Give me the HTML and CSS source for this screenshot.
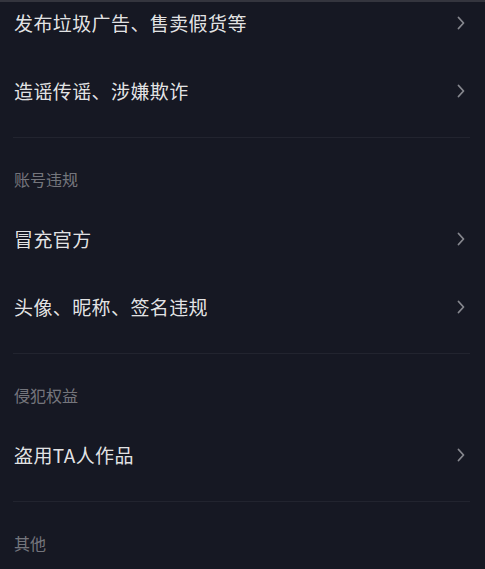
FILE: index.html
```html
<!DOCTYPE html>
<html lang="zh-CN">
<head>
<meta charset="utf-8">
<title>举报</title>
<link rel="stylesheet" href="styles.css">
</head>
<body>
<div class="topline"></div>
<div class="list">
  <div class="row"><span class="label">发布垃圾广告、售卖假货等</span><svg class="chev" width="8" height="14" viewBox="0 0 8 14"><path d="M1.5 1.5 L6.5 7 L1.5 12.5" /></svg></div>
  <div class="row"><span class="label">造谣传谣、涉嫌欺诈</span><svg class="chev" width="8" height="14" viewBox="0 0 8 14"><path d="M1.5 1.5 L6.5 7 L1.5 12.5" /></svg></div>
  <div class="divider"></div>
  <div class="section">账号违规</div>
  <div class="row"><span class="label">冒充官方</span><svg class="chev" width="8" height="14" viewBox="0 0 8 14"><path d="M1.5 1.5 L6.5 7 L1.5 12.5" /></svg></div>
  <div class="row"><span class="label">头像、昵称、签名违规</span><svg class="chev" width="8" height="14" viewBox="0 0 8 14"><path d="M1.5 1.5 L6.5 7 L1.5 12.5" /></svg></div>
  <div class="divider"></div>
  <div class="section">侵犯权益</div>
  <div class="row"><span class="label">盗用TA人作品</span><svg class="chev" width="8" height="14" viewBox="0 0 8 14"><path d="M1.5 1.5 L6.5 7 L1.5 12.5" /></svg></div>
  <div class="divider"></div>
  <div class="section">其他</div>
</div>
</body>
</html>
```
FILE: styles.css
```css
html, body {
  margin: 0;
  padding: 0;
  background: #161823;
  overflow: hidden;
}
body {
  font-family: "Noto Sans CJK SC", "Noto Sans", sans-serif;
  width: 485px;
  height: 569px;
}
.topline {
  height: 2px;
  background: #34353e;
}
.list {
  margin-top: -13px;
  display: flex;
  flex-direction: column;
}
.row {
  height: 68px;
  display: flex;
  align-items: center;
  justify-content: space-between;
  padding: 0 20px 0 14px;
}
.label {
  font-size: 19px;
  line-height: 24px;
  letter-spacing: 0.4px;
  color: rgba(255, 255, 255, 0.9);
}
.chev path {
  fill: none;
  stroke: #86878e;
  stroke-width: 1.8;
  stroke-linecap: round;
  stroke-linejoin: round;
}
.divider {
  height: 1px;
  background: #22242f;
  margin: 12px 15px 0 13px;
}
.section {
  padding: 31px 14px 16px;
  font-size: 16px;
  line-height: 20px;
  color: rgba(255, 255, 255, 0.42);
}
```
